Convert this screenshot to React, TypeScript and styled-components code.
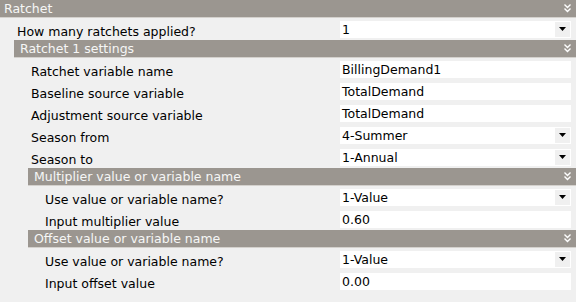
import React from "react";
import styled, { createGlobalStyle } from "styled-components";

const GlobalStyle = createGlobalStyle`
  html, body {
    margin: 0;
    padding: 0;
    background: #f0f0f0;
  }
  body {
    font-family: "DejaVu Sans", Verdana, sans-serif;
    font-size: 12.5px;
    color: #000;
  }
`;

const Grid = styled.div`
  width: 576px;
  display: flex;
  flex-direction: column;
`;

const Header = styled.div<{ $level: number }>`
  margin-left: ${({ $level }) => $level * 14}px;
  height: 17px;
  background: #9b9690;
  border-bottom: 1px solid #d4d1cd;
  color: #f6f6f6;
  display: flex;
  align-items: center;
  justify-content: space-between;
  padding: 0 5px 0 ${({ $level }) => ($level === 0 ? 4 : 6)}px;
`;

const HeaderTitle = styled.span`
  line-height: 17px;
  white-space: nowrap;
`;

const Row = styled.div`
  display: grid;
  grid-template-columns: 340px 231px;
  height: 22px;
  align-items: center;
`;

const Label = styled.div<{ $level: number }>`
  padding-left: ${({ $level }) => 17 + $level * 14}px;
  padding-top: 4px;
  white-space: nowrap;
`;

const ValueBox = styled.div`
  height: 17px;
  background: #fff;
  display: flex;
  align-items: center;
  justify-content: space-between;
  padding-left: 2px;
`;

const DropButton = styled.div`
  width: 15px;
  height: 15px;
  background: #f0f0f0;
  display: flex;
  align-items: center;
  justify-content: center;
  margin-right: 1px;
`;

const Chevrons = () => (
  <svg width="7" height="9" viewBox="0 0 7 9">
    <path d="M0.5 0.5 L3.5 3.5 L6.5 0.5 M0.5 4.5 L3.5 7.5 L6.5 4.5" stroke="#fff" strokeWidth="1.4" fill="none" />
  </svg>
);

const Caret = () => (
  <svg width="7" height="4" viewBox="0 0 7 4">
    <path d="M0 0 H7 L3.5 4 Z" fill="#000" />
  </svg>
);

type Field = { label: string; value: string; drop?: boolean };

const Section = ({ level, title }: { level: number; title: string }) => (
  <Header $level={level}>
    <HeaderTitle>{title}</HeaderTitle>
    <Chevrons />
  </Header>
);

const Fields = ({ level, items }: { level: number; items: Field[] }) => (
  <>
    {items.map((f) => (
      <Row key={f.label}>
        <Label $level={level}>{f.label}</Label>
        <ValueBox>
          <span>{f.value}</span>
          {f.drop && (
            <DropButton>
              <Caret />
            </DropButton>
          )}
        </ValueBox>
      </Row>
    ))}
  </>
);

export default function App() {
  return (
    <>
      <GlobalStyle />
      <Grid>
        <Section level={0} title="Ratchet" />
        <Fields level={0} items={[{ label: "How many ratchets applied?", value: "1", drop: true }]} />
        <Section level={1} title="Ratchet 1 settings" />
        <Fields
          level={1}
          items={[
            { label: "Ratchet variable name", value: "BillingDemand1" },
            { label: "Baseline source variable", value: "TotalDemand" },
            { label: "Adjustment source variable", value: "TotalDemand" },
            { label: "Season from", value: "4-Summer", drop: true },
            { label: "Season to", value: "1-Annual", drop: true },
          ]}
        />
        <Section level={2} title="Multiplier value or variable name" />
        <Fields
          level={2}
          items={[
            { label: "Use value or variable name?", value: "1-Value", drop: true },
            { label: "Input multiplier value", value: "0.60" },
          ]}
        />
        <Section level={2} title="Offset value or variable name" />
        <Fields
          level={2}
          items={[
            { label: "Use value or variable name?", value: "1-Value", drop: true },
            { label: "Input offset value", value: "0.00" },
          ]}
        />
      </Grid>
    </>
  );
}
